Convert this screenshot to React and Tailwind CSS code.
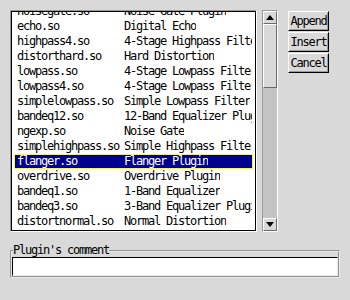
import React from "react";

const plugins = [
  ["noisegate.so", "Noise Gate Plugin"],
  ["echo.so", "Digital Echo"],
  ["highpass4.so", "4-Stage Highpass Filter"],
  ["distorthard.so", "Hard Distortion"],
  ["lowpass.so", "4-Stage Lowpass Filter"],
  ["lowpass4.so", "4-Stage Lowpass Filter"],
  ["simplelowpass.so", "Simple Lowpass Filter"],
  ["bandeq12.so", "12-Band Equalizer Plugin"],
  ["ngexp.so", "Noise Gate"],
  ["simplehighpass.so", "Simple Highpass Filter"],
  ["flanger.so", "Flanger Plugin"],
  ["overdrive.so", "Overdrive Plugin"],
  ["bandeq1.so", "1-Band Equalizer"],
  ["bandeq3.so", "3-Band Equalizer Plugin"],
  ["distortnormal.so", "Normal Distortion"],
];

const font = "font-['DejaVu_Sans_Mono',monospace] text-[12px] tracking-[-1.22px] leading-[13px]";

function TkButton({ children }) {
  return (
    <button className="h-[20px] w-[41px] border border-t-white border-l-white border-b-black border-r-black bg-[#d9d9d9] text-black">
      <span className="block border border-transparent border-b-[#9a9a9a] border-r-[#9a9a9a] leading-[16px]">{children}</span>
    </button>
  );
}

function Arrow({ up }) {
  return (
    <div className="flex h-[13px] w-[14px] items-center justify-center border border-t-white border-l-white border-b-[#6a6a6a] border-r-[#6a6a6a] bg-[#d9d9d9]">
      <svg width="8" height="5" viewBox="0 0 8 5">
        {up ? <polygon points="4,0 8,5 0,5" fill="black" /> : <polygon points="0,0 8,0 4,5" fill="black" />}
      </svg>
    </div>
  );
}

export default function App() {
  return (
    <div className={`h-[300px] w-[350px] bg-[#d9d9d9] pl-[10px] pt-[10px] text-black ${font}`}>
      <div className="flex h-[222px]">
        <div className="h-full w-[247px] border border-t-[#9a9a9a] border-l-[#9a9a9a] border-b-white border-r-white">
          <div className="h-full overflow-hidden border border-black bg-white">
            <div className="mt-[-8px]">
              {plugins.map(([file, name]) => {
                const sel = file === "flanger.so";
                return (
                  <div
                    key={file}
                    className={`mx-[2px] flex h-[15px] items-center whitespace-nowrap border pl-[2px] ${
                      sel ? "border-[#ffff00] bg-[#000090] text-white" : "border-transparent"
                    }`}
                  >
                    <span className="w-[107px] shrink-0 overflow-hidden">{file}</span>
                    <span className="overflow-hidden">{name}</span>
                  </div>
                );
              })}
            </div>
          </div>
        </div>

        <div className="ml-[5px] flex h-full w-[16px] flex-col border border-t-[#9a9a9a] border-l-[#9a9a9a] border-b-white border-r-white bg-[#c3c3c3]">
          <Arrow up />
          <div className="h-[64px] border border-t-white border-l-white border-b-[#6a6a6a] border-r-[#6a6a6a] bg-[#d9d9d9]" />
          <div className="flex-1" />
          <Arrow />
        </div>

        <div className="ml-[10px] mt-[1px] flex flex-col gap-[1px]">
          <TkButton>Append</TkButton>
          <TkButton>Insert</TkButton>
          <TkButton>Cancel</TkButton>
        </div>
      </div>

      <fieldset className="mt-[12px] w-[330px] border-2 border-[#e8e8e8] p-0 [border-style:groove]">
        <legend className="ml-[1px] p-0">Plugin's comment</legend>
        <div className="h-[19px] w-full border border-t-black border-l-black border-b-[#e8e8e8] border-r-[#e8e8e8] bg-white" />
      </fieldset>
    </div>
  );
}
